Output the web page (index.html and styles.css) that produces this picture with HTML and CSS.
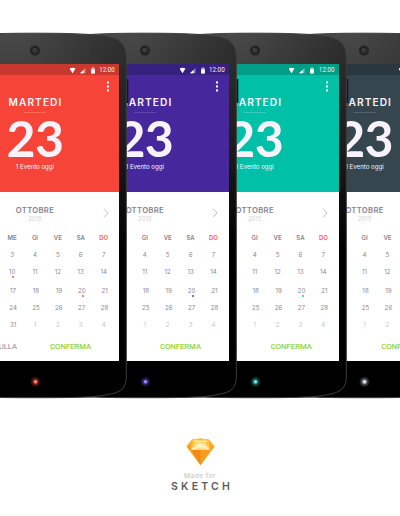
FILE: index.html
```html
<!DOCTYPE html>
<html lang="it">
<head>
<meta charset="utf-8">
<title>Calendario</title>
<link rel="stylesheet" href="styles.css">
</head>
<body>
<main class="phones" id="phones"></main>
<footer class="credit">
  <svg class="gem" viewBox="0 0 28 28" width="29" height="28">
    <defs><linearGradient id="gem" x1="0" y1="0" x2="0" y2="1"><stop offset="0" stop-color="#ffb42c"/><stop offset="1" stop-color="#f07a00"/></linearGradient></defs>
    <path d="M5.500 1.500 14 .5l8.500 1L28 8.500 14 27 0 8.500z" fill="url(#gem)"/>
    <path d="M5.500 1.500 14 .5 4.500 12zM22.500 1.500 14 .5 23.500 12z" fill="#ffc13a"/>
    <path d="M7 2.500h14l-2 2H9z" fill="#fff0a8"/>
    <path d="M9 4.500h10L23.500 12h-19z" fill="#ffdc83"/>
    <path d="M5 11.500 10 7l4-2 4 2 5 4.500-9-2z" fill="#fff1c4"/>
    <path d="M4.500 12h19L14 27z" fill="#f28a17"/>
    <path d="M0 8.500 4.500 12 14 27zM28 8.500 23.500 12 14 27z" fill="#fbae2d"/>
    <path d="M14 12h9.500L14 27z" fill="#f79a20"/>
  </svg>
  <div class="made">Made for</div>
  <div class="sketch">SKETCH</div>
</footer>
<script src="script.js"></script>
</body>
</html>
```
FILE: styles.css
```css
* { box-sizing: border-box; }
body {
  margin: 0;
  width: 400px;
  height: 516px;
  overflow: hidden;
  background: #fff;
  font-family: Lato, "Open Sans", sans-serif;
}
.phones { display: flex; width: 400px; height: 400px; padding-top: 32px; overflow: hidden; }
.phone {
  position: relative;
  flex: none;
  width: 184px;
  height: 368px;
  margin-right: -74.150px;
  padding: 31.500px 7.700px 0 8px;
}
.phone:nth-child(1) { z-index: 4; margin-left: -57.200px; }
.phone:nth-child(2) { z-index: 3; }
.phone:nth-child(3) { z-index: 2; }
.phone:nth-child(4) { z-index: 1; }
.body { position: absolute; left: 0; top: 0; overflow: visible; }
.screen { position: relative; height: 297px; background: #fff; overflow: hidden; }
.red { --main: #f64538; --bar: #c8382e; --rule: #fa6a50; --glow: #ff5247; }
.violet { --main: #46289c; --bar: #382080; --rule: #6046ac; --glow: #5a3ec8; }
.teal { --main: #00c1a7; --bar: #009d87; --rule: #35cfba; --glow: #16c5ae; }
.slate { --main: #36464e; --bar: #2a373e; --rule: #55646c; --glow: #36464e; }
.status {
  height: 11.500px;
  background: var(--bar);
  display: flex;
  justify-content: flex-end;
  align-items: center;
  padding: 1.600px 4.300px 0 0;
  color: #f5eef3;
  font: 6.300px/11px Roboto, sans-serif;
}
.status svg { display: block; margin-right: 3.500px; }
.hero { height: 117px; background: var(--main); color: #f8f3fb; text-align: center; padding-top: 6px; }
.more { display: block; margin: 0 9.500px 0 auto; }
.day { height: 14px; margin-top: 3px; font: 600 10.200px/14px Inter, sans-serif; letter-spacing: 1.050px; padding-left: 1px; }
.rule { width: 22px; height: 1px; margin: 2.700px auto 0; background: var(--rule); }
.date { height: 48px; margin-top: 1.200px; font: 700 50px/48px Lato, sans-serif; letter-spacing: -.6px; }
.event { margin-top: .5px; font: 6.100px/9px Inter, sans-serif; white-space: nowrap; }
.month { position: relative; height: 36px; padding-top: 13.500px; text-align: center; color: #85828e; }
.name { font: 600 7.700px/10px Inter, sans-serif; letter-spacing: .3px; }
.year { font: 6px/8px Inter, sans-serif; color: #d3d1d6; margin-top: -.5px; }
.next { position: absolute; right: 10.500px; top: 16px; }
.week, .days { display: grid; grid-template-columns: repeat(7, 22.900px); justify-content: center; text-align: center; }
.week { height: 20px; font: 600 6px/20px Inter, sans-serif; color: #85828f; }
.week span:last-child { color: #f55a50; }
.days { grid-template-rows: 14px 20px 17px 17px 18px; font: 6.200px/14px Inter, sans-serif; color: #8b8894; }
.days span { position: relative; align-self: center; height: 14px; }
.days .late { left: 1px; }
.days .out { color: #c8c6cd; }
.marked::after {
  content: "";
  position: absolute;
  left: 11.500px;
  top: 11px;
  width: 2px;
  height: 2px;
  border-radius: 50%;
  background: var(--glow);
}
.actions { display: flex; padding-top: 7px; font: 7.700px/12px Roboto, sans-serif; color: #8b8894; }
.cancel { width: 66.300px; text-align: right; white-space: nowrap; }
.confirm { margin-left: 33px; color: #84d52c; -webkit-text-stroke: .15px #84d52c; }
.teal .confirm { margin-left: 34px; }
.slate .confirm { margin-left: 34.500px; }
.credit { display: flex; flex-direction: column; align-items: center; padding-top: 37.500px; }
.gem { display: block; }
.made { margin-top: 6px; font: 500 6.700px/9px Inter, sans-serif; letter-spacing: .4px; color: #c9c9c9; }
.sketch { margin: .5px 0 0 4px; font: 600 10.500px/12px Inter, sans-serif; letter-spacing: 3.200px; color: #5a5a5a; }
```
FILE: script.js
```js
const themes = [['red', '#ff5247'], ['violet', '#7657ee'], ['teal', '#35d9c5'], ['slate', '#c5d2dc']];
const dates = [1, 2, 3, 4, 5, 6, 7, 8, 9, 10, 11, 12, 13, 14, 15, 16, 17, 18, 19, 20, 21, 22, 23, 24, 25, 26, 27, 28, 29, 30, 31, 1, 2, 3, 4];

function cell(n, i) {
  const names = [];
  if (i > 13 && i < 31) names.push('late');
  if (i > 30) names.push('out');
  if (n === 10 || n === 20) names.push('marked');
  return `<span class="${names.join(' ')}">${n}</span>`;
}

function phone([name, glow]) {
  const shape = 'M92 1.200C120 1.200 138 1.700 152 2.900C175 4.800 183.300 9 183.300 27V346Q183.300 357.500 172 361C164 363 155 364.300 148 364.900C130 365.700 110 365.700 92 365.700S54 365.700 36 364.900C29 364.300 20 363 12 361Q.7 357.500 .7 346V27C.7 9 9 4.800 32 2.900C46 1.700 64 1.200 92 1.200Z';
  return `<section class="phone ${name}">
  <svg class="body" width="186" height="368" viewBox="0 0 186 368">
    <defs>
      <linearGradient id="side-${name}" x1="0" y1="0" x2="0" y2="1"><stop offset="0" stop-color="#484848"/><stop offset=".1" stop-color="#404040"/><stop offset=".3" stop-color="#2c2c2c"/><stop offset=".6" stop-color="#000"/></linearGradient>
      <linearGradient id="shade-${name}"><stop offset=".45" stop-color="#000" stop-opacity="0"/><stop offset="1" stop-color="#000" stop-opacity=".35"/></linearGradient>
      <radialGradient id="led-${name}"><stop offset="0" stop-color="${glow}"/><stop offset=".2" stop-color="${glow}"/><stop offset=".5" stop-color="${glow}" stop-opacity=".35"/><stop offset="1" stop-color="${glow}" stop-opacity="0"/></radialGradient>
    </defs>
    <rect x="183" y="47" width="2.300" height="24" fill="#15171b"/>
    <path d="${shape}" fill="url(#side-${name})"/>
    <path d="${shape}" fill="url(#shade-${name})" stroke="#3d3d3d" stroke-width="1"/>
    <circle cx="92" cy="18.500" r="5.200" fill="#292929"/>
    <circle cx="92" cy="18.500" r="3.300" fill="#363636" stroke="#1c1c1c"/>
    <circle cx="91" cy="17.500" r="1" fill="#494949"/>
    <circle cx="150" cy="18.500" r="1.300" fill="#303030"/><circle cx="155.500" cy="18.500" r="1.300" fill="#303030"/>
    <circle cx="92.500" cy="349.800" r="5.500" fill="url(#led-${name})"/>
    <circle cx="92.500" cy="349.800" r="1.200" fill="#fff" opacity=".45"/>
  </svg>
  <div class="screen">
    <div class="status">
      <svg width="26" height="7" viewBox="0 0 26 7"><path d="M-.5 1.500Q2.500 0 5.500 1.500L2.500 6.300z" fill="#fff"/><path d="M15.500 1v5.300H10z" fill="#fff" opacity=".45"/><path d="M13.500 3v3.300H10z" fill="#fff"/><path d="M21.200 1h1V.3h1.600V1h1v5.500h-3.600z" fill="#fff" opacity=".6"/><path d="M21.200 2.500h3.600v4h-3.600z" fill="#fff"/></svg>12:00
    </div>
    <div class="hero">
      <svg class="more" width="4" height="11" viewBox="0 0 4 11"><circle cx="2" cy="1.500" r="1.150" fill="#fff"/><circle cx="2" cy="5.500" r="1.150" fill="#fff"/><circle cx="2" cy="9.500" r="1.150" fill="#fff"/></svg>
      <div class="day">MARTEDI</div>
      <div class="rule"></div>
      <div class="date">23</div>
      <div class="event">1 Evento oggi</div>
    </div>
    <div class="month">
      <div class="name">OTTOBRE</div><div class="year">2015</div>
      <svg class="next" width="6" height="10" viewBox="0 0 6 10"><path d="M1 .7 5 5 1 9.300" fill="none" stroke="#c2c1c5"/></svg>
    </div>
    <div class="week">${['LU', 'MA', 'ME', 'GI', 'VE', 'SA', 'DO'].map(d => `<span>${d}</span>`).join('')}</div>
    <div class="days">${dates.map(cell).join('')}</div>
    <div class="actions"><span class="cancel">ANNULLA</span><span class="confirm">CONFERMA</span></div>
  </div>
</section>`;
}

document.getElementById('phones').innerHTML = themes.map(phone).join('');
```
